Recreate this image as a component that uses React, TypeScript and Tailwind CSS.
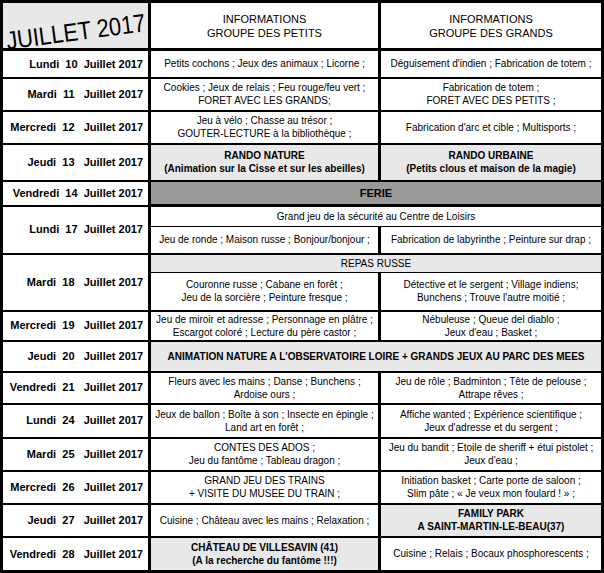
import React from 'react';

type Cell = {
  lines: string[];
  gray?: boolean;
  bold?: boolean;
  span?: boolean;
};

type Row = {
  date: string;
  h: string;
  cells: Cell[];
};

const font = { fontFamily: '"Liberation Sans", Arial, sans-serif' };

const rows: Row[] = [
  {
    date: 'Lundi  10  Juillet 2017',
    h: 'h-[28px]',
    cells: [
      { lines: ['Petits cochons ; Jeux des animaux ; Licorne ;'] },
      { lines: ["Déguisement d'indien ; Fabrication de totem ;"] },
    ],
  },
  {
    date: 'Mardi  11   Juillet 2017',
    h: 'h-[33px]',
    cells: [
      { lines: ['Cookies ; Jeux de relais ; Feu rouge/feu vert ;', 'FORET AVEC LES GRANDS;'] },
      { lines: ['Fabrication de totem ;', 'FORET AVEC DES PETITS ;'] },
    ],
  },
  {
    date: 'Mercredi  12   Juillet 2017',
    h: 'h-[33px]',
    cells: [
      { lines: ['Jeu à vélo ; Chasse au trésor ;', 'GOUTER-LECTURE à la bibliothèque ;'] },
      { lines: ["Fabrication d'arc et cible ; Multisports ;"] },
    ],
  },
  {
    date: 'Jeudi  13   Juillet 2017',
    h: 'h-[37px]',
    cells: [
      { lines: ['RANDO NATURE', '(Animation sur la Cisse et sur les abeilles)'], gray: true, bold: true },
      { lines: ['RANDO URBAINE', '(Petits clous et maison de la magie)'], gray: true, bold: true },
    ],
  },
];

const rowsAfter: Row[] = [
  {
    date: 'Mercredi  19   Juillet 2017',
    h: 'h-[30px]',
    cells: [
      { lines: ['Jeu de miroir et adresse ; Personnage en plâtre ;', 'Escargot coloré ; Lecture du père castor ;'] },
      { lines: ['Nébuleuse ; Queue del diablo ;', "Jeux d'eau ; Basket ;"] },
    ],
  },
  {
    date: 'Jeudi  20   Juillet 2017',
    h: 'h-[31px]',
    cells: [
      {
        lines: ["ANIMATION NATURE A L'OBSERVATOIRE LOIRE + GRANDS JEUX AU PARC DES MEES"],
        gray: true,
        bold: true,
        span: true,
      },
    ],
  },
  {
    date: 'Vendredi  21   Juillet 2017',
    h: 'h-[32px]',
    cells: [
      { lines: ['Fleurs avec les mains ; Danse ; Bunchens ;', 'Ardoise ours ;'] },
      { lines: ['Jeu de rôle ; Badminton ; Tête de pelouse ;', 'Attrape rêves ;'] },
    ],
  },
  {
    date: 'Lundi  24   Juillet 2017',
    h: 'h-[34px]',
    cells: [
      { lines: ['Jeux de ballon ; Boîte à son ; Insecte en épingle ;', 'Land art en forêt ;'] },
      { lines: ['Affiche wanted ; Expérience scientifique ;', "Jeux d'adresse et du sergent ;"] },
    ],
  },
  {
    date: 'Mardi  25   Juillet 2017',
    h: 'h-[33px]',
    cells: [
      { lines: ['CONTES DES ADOS ;', 'Jeu du fantôme ; Tableau dragon ;'] },
      { lines: ['Jeu du bandit ; Etoile de sheriff + étui pistolet ;', "Jeux d'eau ;"] },
    ],
  },
  {
    date: 'Mercredi  26   Juillet 2017',
    h: 'h-[33px]',
    cells: [
      { lines: ['GRAND JEU DES TRAINS', '+ VISITE DU MUSEE DU TRAIN ;'] },
      { lines: ['Initiation basket ; Carte porte de saloon ;', 'Slim pâte ; « Je veux mon foulard ! » ;'] },
    ],
  },
  {
    date: 'Jeudi  27   Juillet 2017',
    h: 'h-[33px]',
    cells: [
      { lines: ['Cuisine ; Château avec les mains ; Relaxation ;'] },
      { lines: ['FAMILY PARK', 'A SAINT-MARTIN-LE-BEAU(37)'], gray: true, bold: true },
    ],
  },
  {
    date: 'Vendredi  28   Juillet 2017',
    h: 'h-[35px]',
    cells: [
      { lines: ['CHÂTEAU DE VILLESAVIN (41)', '(A la recherche du fantôme !!!)'], gray: true, bold: true },
      { lines: ['Cuisine ; Relais ; Bocaux phosphorescents ;'] },
    ],
  },
];

function DateCell({ text, rowSpan }: { text: string; rowSpan?: number }) {
  return (
    <td
      rowSpan={rowSpan}
      className="border-2 border-r-[3px] border-black pr-[5px] text-right align-middle text-[11px] font-bold whitespace-pre"
    >
      {text}
    </td>
  );
}

function InfoCell({ cell }: { cell: Cell }) {
  return (
    <td
      colSpan={cell.span ? 2 : 1}
      className={
        'border-2 border-r-[3px] border-black px-1 text-center align-middle text-[10px] leading-[13px] whitespace-nowrap ' +
        (cell.gray ? 'bg-[#e8e8e8] ' : '') +
        (cell.bold ? 'font-bold' : '')
      }
    >
      {cell.lines.map((l, i) => (
        <div key={i}>{l}</div>
      ))}
    </td>
  );
}

function DayRow({ row }: { row: Row }) {
  return (
    <tr className={row.h}>
      <DateCell text={row.date} />
      {row.cells.map((c, i) => (
        <InfoCell key={i} cell={c} />
      ))}
    </tr>
  );
}

export default function App() {
  return (
    <div className="h-[573px] w-[604px] overflow-hidden bg-white text-black" style={font}>
      <table className="w-[604px] table-fixed border-collapse border-[3px] border-black">
        <colgroup>
          <col className="w-[148px]" />
          <col className="w-[230px]" />
          <col />
        </colgroup>
        <tbody>
          <tr className="h-[48px]">
            <td className="border-[3px] border-black bg-[#e8e8e8] p-0">
              <div className="flex h-[45px] items-end overflow-hidden">
                <div className="-mb-[6px] ml-[5px] origin-bottom-left -rotate-[7.5deg] scale-y-[1.15] text-[22px] leading-none whitespace-nowrap">
                  JUILLET 2017
                </div>
              </div>
            </td>
            <td className="border-[3px] border-black text-center text-[11px] leading-[14px]">
              <div>INFORMATIONS</div>
              <div>GROUPE DES PETITS</div>
            </td>
            <td className="border-[3px] border-black text-center text-[11px] leading-[14px]">
              <div>INFORMATIONS</div>
              <div>GROUPE DES GRANDS</div>
            </td>
          </tr>

          {rows.map((r, i) => (
            <DayRow key={i} row={r} />
          ))}

          <tr className="h-[25px]">
            <DateCell text="Vendredi  14  Juillet 2017" />
            <td
              colSpan={2}
              className="border-2 border-b-[3px] border-black bg-[#999999] text-center text-[11px] font-bold"
            >
              FERIE
            </td>
          </tr>

          <tr className="h-[21px]">
            <DateCell text="Lundi  17  Juillet 2017" rowSpan={2} />
            <td colSpan={2} className="border border-black text-center text-[10px]">
              Grand jeu de la sécurité au Centre de Loisirs
            </td>
          </tr>
          <tr className="h-[27px]">
            <td className="border-2 border-t border-r-[3px] border-black text-center text-[10px]">
              Jeu de ronde ; Maison russe ; Bonjour/bonjour ;
            </td>
            <td className="border-2 border-t border-black text-center text-[10px]">
              Fabrication de labyrinthe ; Peinture sur drap ;
            </td>
          </tr>

          <tr className="h-[19px]">
            <DateCell text="Mardi  18   Juillet 2017" rowSpan={2} />
            <td colSpan={2} className="border border-black bg-[#e8e8e8] text-center text-[10px]">
              REPAS RUSSE
            </td>
          </tr>
          <tr className="h-[38px]">
            <td className="border-2 border-t border-r-[3px] border-black text-center text-[10px] leading-[13px]">
              <div>Couronne russe ; Cabane en forêt ;</div>
              <div>Jeu de la sorcière ; Peinture fresque ;</div>
            </td>
            <td className="border-2 border-t border-black text-center text-[10px] leading-[13px]">
              <div>Détective et le sergent ; Village indiens;</div>
              <div>Bunchens ; Trouve l'autre moitié ;</div>
            </td>
          </tr>

          {rowsAfter.map((r, i) => (
            <DayRow key={i} row={r} />
          ))}
        </tbody>
      </table>
    </div>
  );
}
